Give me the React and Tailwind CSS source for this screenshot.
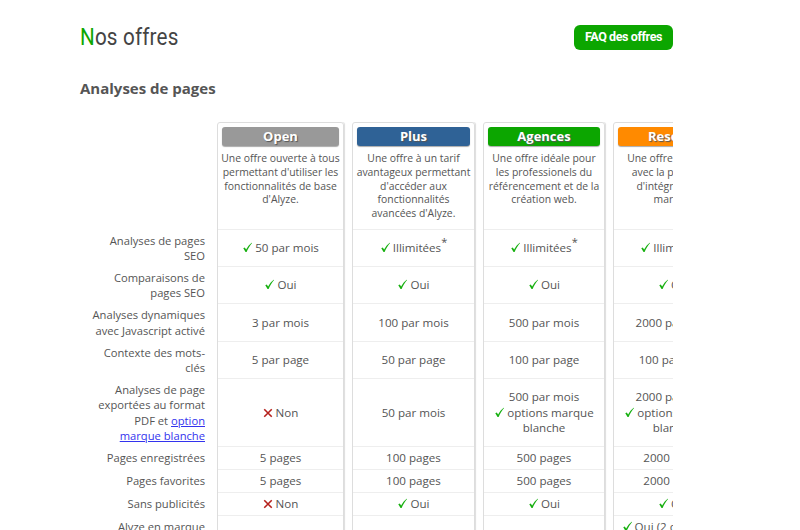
const Check = () => (
  <svg viewBox="0 0 12 12" className="inline-block w-[11px] h-[11px] mr-[2px] align-[-1px]">
    <path d="M1.4 6.8 L3 6 L4.5 8.2 C6 5.4 8 2.8 10.6 0.8 L11 1.2 C8.6 4 6.6 7.2 5 11 L3.9 11 Z" fill="#17b010" />
  </svg>
);
const Cross = () => (
  <svg viewBox="0 0 12 12" className="inline-block w-[10px] h-[10px] mr-[3px] align-[-1px]">
    <path d="M1.5 1.5 L10.5 10.5 M10.5 1.5 L1.5 10.5" stroke="#b5201c" strokeWidth="1.9" fill="none" />
  </svg>
);

const plans = [
  { name: "Open", bg: "bg-[#999999]", desc: "Une offre ouverte à tous permettant d'utiliser les fonctionnalités de base d'Alyze." },
  { name: "Plus", bg: "bg-[#2f6296]", desc: "Une offre à un tarif avantageux permettant d'accéder aux fonctionnalités avancées d'Alyze." },
  { name: "Agences", bg: "bg-[#0ca600]", desc: "Une offre idéale pour les professionels du référencement et de la création web." },
  { name: "Reseller", bg: "bg-[#ff8a00]", desc: "Une offre complète avec la possibilité d'intégrer votre marque." },
];

const Star = () => <sup className="text-[11px] leading-none align-[1px]">*</sup>;
const Y = ({ children = "Oui" }) => (<><Check />{children}</>);
const N = () => (<><Cross />Non</>);

const rows = [
  { label: "Analyses de pages SEO", h: "h-[37px]", v: [<Y>50 par mois</Y>, <><Y>Illimitées</Y><Star /></>, <><Y>Illimitées</Y><Star /></>, <><Y>Illimitées</Y><Star /></>] },
  { label: "Comparaisons de pages SEO", h: "h-[37px]", v: [<Y />, <Y />, <Y />, <Y />] },
  { label: "Analyses dynamiques avec Javascript activé", h: "h-[38px]", v: ["3 par mois", "100 par mois", "500 par mois", "2000 par mois"] },
  { label: "Contexte des mots-clés", h: "h-[37px]", v: ["5 par page", "50 par page", "100 par page", "100 par page"] },
  {
    label: <>Analyses de page exportées au format PDF et <a href="#" className="text-[#3333ee] underline">option marque blanche</a></>,
    h: "h-[68px]",
    v: [<N />, "50 par mois", <>500 par mois<br /><Y>options marque blanche</Y></>, <>2000 par mois<br /><Y>options marque blanche</Y></>],
  },
  { label: "Pages enregistrées", h: "h-[23px]", v: ["5 pages", "100 pages", "500 pages", "2000 pages"] },
  { label: "Pages favorites", h: "h-[23px]", v: ["5 pages", "100 pages", "500 pages", "2000 pages"] },
  { label: "Sans publicités", h: "h-[23px]", v: [<N />, <Y />, <Y />, <Y />] },
  { label: "Alyze en marque blanche", h: "h-[38px]", v: [<N />, <N />, <N />, <><Y>Oui (2 domaines)</Y><br />inclus</>] },
];

const widths = ["w-[127px]", "w-[123px]", "w-[122px]", "w-[122px]"];

export default function App() {
  return (
    <div className="h-[530px] overflow-hidden bg-white text-[#555555] font-['Open_Sans',sans-serif]">
      <div className="w-[593px] ml-20">
        <div className="flex items-center justify-between pt-[25px] h-[50px]">
          <h1 className="text-[24px] leading-[25px] font-normal text-[#444444] font-['Roboto',sans-serif] tracking-[0.2px] scale-x-[0.86] origin-left">
            <span className="text-[#0ca600]">N</span>os offres
          </h1>
          <a className="flex items-center justify-center w-[99px] h-[25px] rounded-[6px] bg-[#0ca600] text-white text-[12.5px] font-bold font-['Roboto',sans-serif] tracking-[-0.4px]">
            FAQ des offres
          </a>
        </div>
        <h2 className="mt-[28px] text-[15px] leading-5 font-bold text-[#555555]">Analyses de pages</h2>
        <div className="mt-[24px] overflow-hidden">
          <div className="flex w-[800px] items-start">
            <div className="w-[137px] shrink-0">
              <div className="h-[107px]" />
              {rows.map((r, i) => (
                <div key={i} className={`${r.h} flex items-center justify-end text-right pr-3 pl-3 pt-[1px] text-[11.2px] leading-[15.5px]`}>
                  <div>{r.label}</div>
                </div>
              ))}
            </div>
            <div className="flex gap-2">
              {plans.map((p, pi) => (
                <div key={p.name} className={`${widths[pi]} shrink-0 border border-[#dddddd] rounded-t-[3px] shadow-[1px_0_1px_#dddddd]`}>
                  <div className="h-[106px] px-1 pt-1 text-center">
                    <div className={`${p.bg} h-[19px] rounded-[3px] text-white text-[13px] leading-[19px] font-bold shadow-[0_1px_1px_#aaaaaa] [text-shadow:1px_1px_1px_#555555]`}>
                      {p.name}
                    </div>
                    <p className="mt-[6px] -mx-[3px] text-[10.4px] leading-[13.8px]">{p.desc}</p>
                  </div>
                  {rows.map((r, i) => (
                    <div key={i} className={`${r.h} flex items-center justify-center text-center border-t border-[#eeeeee] px-1 text-[11.6px] leading-[15.6px]`}>
                      <div>{r.v[pi]}</div>
                    </div>
                  ))}
                </div>
              ))}
            </div>
          </div>
        </div>
      </div>
    </div>
  );
}
